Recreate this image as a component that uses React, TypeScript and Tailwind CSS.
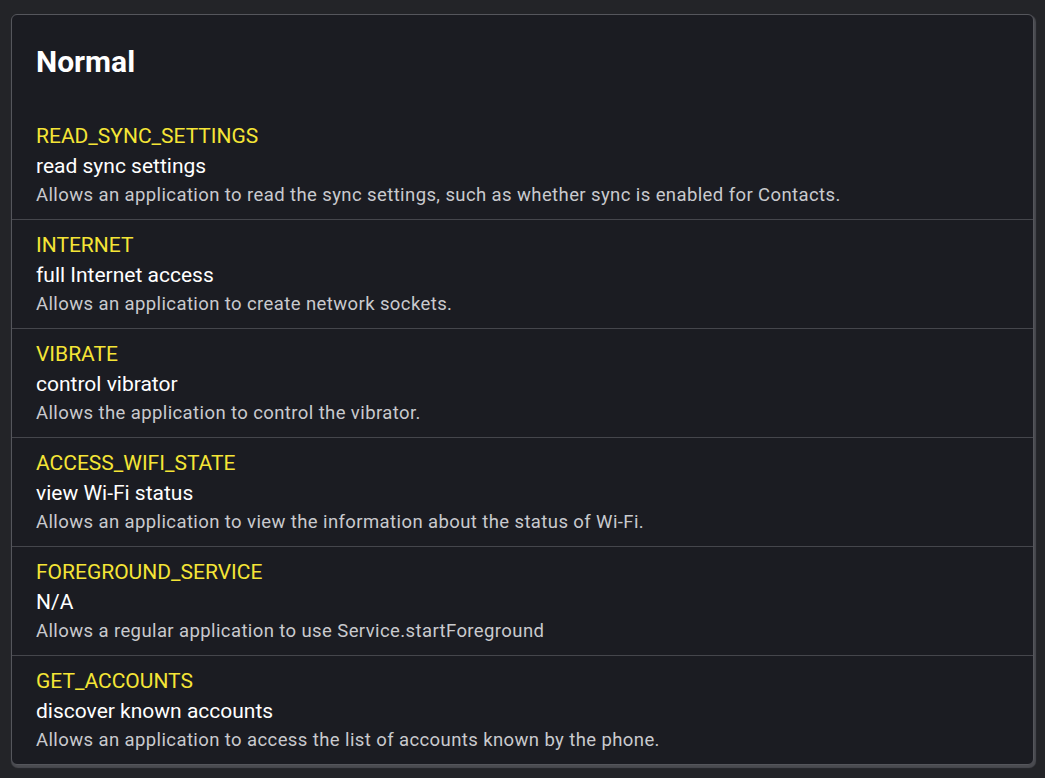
const permissions = [
  {
    name: "READ_SYNC_SETTINGS",
    label: "read sync settings",
    description: "Allows an application to read the sync settings, such as whether sync is enabled for Contacts.",
  },
  {
    name: "INTERNET",
    label: "full Internet access",
    description: "Allows an application to create network sockets.",
  },
  {
    name: "VIBRATE",
    label: "control vibrator",
    description: "Allows the application to control the vibrator.",
  },
  {
    name: "ACCESS_WIFI_STATE",
    label: "view Wi-Fi status",
    description: "Allows an application to view the information about the status of Wi-Fi.",
  },
  {
    name: "FOREGROUND_SERVICE",
    label: "N/A",
    description: "Allows a regular application to use Service.startForeground",
  },
  {
    name: "GET_ACCOUNTS",
    label: "discover known accounts",
    description: "Allows an application to access the list of accounts known by the phone.",
  },
];

export default function App() {
  return (
    <div className="min-h-screen bg-[#232428] px-[11px] pt-[14px] pb-[12px] font-['Roboto',sans-serif]">
      <div className="rounded-[6px] border border-[#55565c] bg-[#1b1c22] shadow-[1px_2px_1px_1px_#4a4b50]">
        <h2 className="px-[24px] pt-[29px] pb-[31px] text-[30px] font-bold leading-[36px] text-white">Normal</h2>
        <ul>
          {permissions.map((p, i) => (
            <li
              key={p.name}
              className={`px-[24px] pt-[10px] pb-[10px] ${i > 0 ? "border-t border-[#45464c]" : ""}`}
            >
              <div className="text-[21px] leading-[30px] text-[#f5e536]">{p.name}</div>
              <div className="text-[21px] leading-[30px] text-white">{p.label}</div>
              <div className="text-[18.5px] leading-[28px] tracking-[0.4px] text-[#c9cace]">{p.description}</div>
            </li>
          ))}
        </ul>
      </div>
    </div>
  );
}
